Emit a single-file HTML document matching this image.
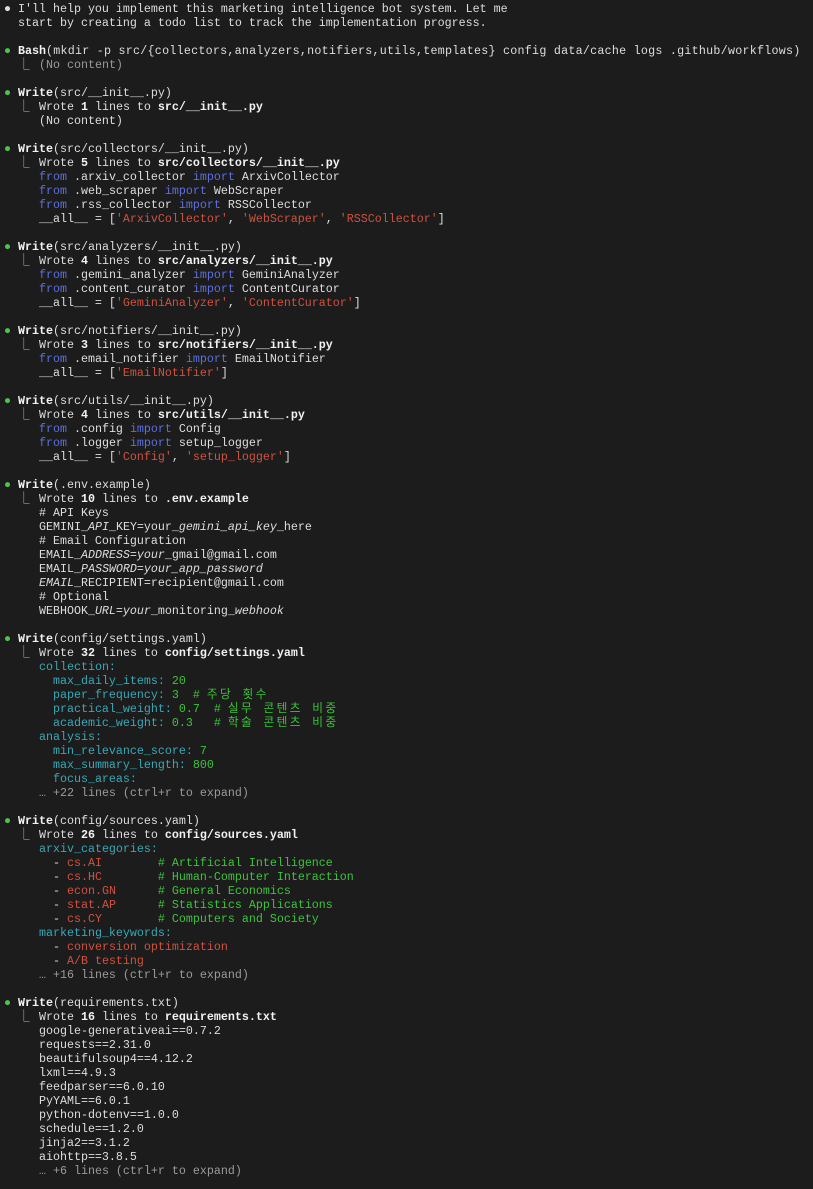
<!DOCTYPE html>
<html><head><meta charset="utf-8"><style>
html,body{margin:0;padding:0;background:#1c1c1c;}
pre{margin:0;padding:2px 0 0 4px;font-family:"Liberation Mono","Noto Sans CJK KR",monospace;font-size:11.67px;line-height:14px;color:#dedede;white-space:pre;width:809px;height:1187px;overflow:hidden;}
b{font-weight:bold;color:#f2f2f2}
.g{color:#4fc24f}
.k{color:#5c6fe0}
.r{color:#d2503e}
.t{color:#38a8b6}
.n{color:#3cc43c}
.d{color:#9a9a9a}
.l{display:inline-block;width:7px;overflow:visible;color:#bbb}
.ko{letter-spacing:2.4px}
.w{letter-spacing:0.26px}
i{font-style:italic}
</style></head><body><pre>● I'll help you implement this marketing intelligence bot system. Let me
  start by creating a todo list to track the implementation progress.

<span class="g">●</span> <b>Bash</b><span class="w">(mkdir -p src/{collectors,analyzers,notifiers,utils,templates} config data/cache logs .github/workflows)</span>
  <span class="d"><span class="l">⎿</span>  (No content)</span>

<span class="g">●</span> <b>Write</b>(src/__init__.py)
  <span class="l">⎿</span>  Wrote <b>1</b> lines to <b>src/__init__.py</b>
     (No content)

<span class="g">●</span> <b>Write</b>(src/collectors/__init__.py)
  <span class="l">⎿</span>  Wrote <b>5</b> lines to <b>src/collectors/__init__.py</b>
     <span class="k">from</span> .arxiv_collector <span class="k">import</span> ArxivCollector
     <span class="k">from</span> .web_scraper <span class="k">import</span> WebScraper
     <span class="k">from</span> .rss_collector <span class="k">import</span> RSSCollector
     __all__ = [<span class="r">'ArxivCollector'</span>, <span class="r">'WebScraper'</span>, <span class="r">'RSSCollector'</span>]

<span class="g">●</span> <b>Write</b>(src/analyzers/__init__.py)
  <span class="l">⎿</span>  Wrote <b>4</b> lines to <b>src/analyzers/__init__.py</b>
     <span class="k">from</span> .gemini_analyzer <span class="k">import</span> GeminiAnalyzer
     <span class="k">from</span> .content_curator <span class="k">import</span> ContentCurator
     __all__ = [<span class="r">'GeminiAnalyzer'</span>, <span class="r">'ContentCurator'</span>]

<span class="g">●</span> <b>Write</b>(src/notifiers/__init__.py)
  <span class="l">⎿</span>  Wrote <b>3</b> lines to <b>src/notifiers/__init__.py</b>
     <span class="k">from</span> .email_notifier <span class="k">import</span> EmailNotifier
     __all__ = [<span class="r">'EmailNotifier'</span>]

<span class="g">●</span> <b>Write</b>(src/utils/__init__.py)
  <span class="l">⎿</span>  Wrote <b>4</b> lines to <b>src/utils/__init__.py</b>
     <span class="k">from</span> .config <span class="k">import</span> Config
     <span class="k">from</span> .logger <span class="k">import</span> setup_logger
     __all__ = [<span class="r">'Config'</span>, <span class="r">'setup_logger'</span>]

<span class="g">●</span> <b>Write</b>(.env.example)
  <span class="l">⎿</span>  Wrote <b>10</b> lines to <b>.env.example</b>
     # API Keys
     GEMINI_<i>API</i>_KEY=your_<i>gemini_api_key</i>_here
     # Email Configuration
     EMAIL_<i>ADDRESS=your</i>_gmail@gmail.com
     EMAIL_<i>PASSWORD=your_app_password</i>
     <i>EMAIL</i>_RECIPIENT=recipient@gmail.com
     # Optional
     WEBHOOK_<i>URL=your</i>_monitoring_<i>webhook</i>

<span class="g">●</span> <b>Write</b>(config/settings.yaml)
  <span class="l">⎿</span>  Wrote <b>32</b> lines to <b>config/settings.yaml</b>
     <span class="t">collection:</span>
       <span class="t">max_daily_items:</span> <span class="n">20</span>
       <span class="t">paper_frequency:</span> <span class="n">3  # <span class="ko">주당 횟수</span></span>
       <span class="t">practical_weight:</span> <span class="n">0.7  # <span class="ko">실무 콘텐츠 비중</span></span>
       <span class="t">academic_weight:</span> <span class="n">0.3   # <span class="ko">학술 콘텐츠 비중</span></span>
     <span class="t">analysis:</span>
       <span class="t">min_relevance_score:</span> <span class="n">7</span>
       <span class="t">max_summary_length:</span> <span class="n">800</span>
       <span class="t">focus_areas:</span>
     <span class="d">… +22 lines (ctrl+r to expand)</span>

<span class="g">●</span> <b>Write</b>(config/sources.yaml)
  <span class="l">⎿</span>  Wrote <b>26</b> lines to <b>config/sources.yaml</b>
     <span class="t">arxiv_categories:</span>
       - <span class="r">cs.AI</span>        <span class="n"># Artificial Intelligence</span>
       - <span class="r">cs.HC</span>        <span class="n"># Human-Computer Interaction</span>
       - <span class="r">econ.GN</span>      <span class="n"># General Economics</span>
       - <span class="r">stat.AP</span>      <span class="n"># Statistics Applications</span>
       - <span class="r">cs.CY</span>        <span class="n"># Computers and Society</span>
     <span class="t">marketing_keywords:</span>
       - <span class="r">conversion optimization</span>
       - <span class="r">A/B testing</span>
     <span class="d">… +16 lines (ctrl+r to expand)</span>

<span class="g">●</span> <b>Write</b>(requirements.txt)
  <span class="l">⎿</span>  Wrote <b>16</b> lines to <b>requirements.txt</b>
     google-generativeai==0.7.2
     requests==2.31.0
     beautifulsoup4==4.12.2
     lxml==4.9.3
     feedparser==6.0.10
     PyYAML==6.0.1
     python-dotenv==1.0.0
     schedule==1.2.0
     jinja2==3.1.2
     aiohttp==3.8.5
     <span class="d">… +6 lines (ctrl+r to expand)</span>
</pre></body></html>
